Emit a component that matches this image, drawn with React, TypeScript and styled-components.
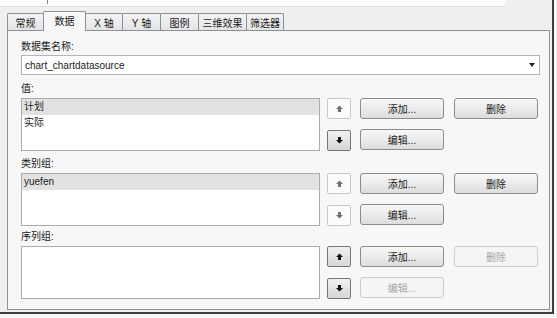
import React from "react";
import styled, { createGlobalStyle } from "styled-components";

const Global = createGlobalStyle`
  html, body { margin: 0; padding: 0; background: #f6f6f6; }
  body {
    font-family: "Liberation Sans", "Noto Sans CJK SC", sans-serif;
    font-size: 10px;
    color: #1b1b1b;
  }
`;

const Window = styled.div`
  width: 552px;
  height: 312px;
  border-right: 2px solid #3d3d3d;
  border-bottom: 2px solid #3d3d3d;
  background: #efefef;
  display: flex;
  flex-direction: column;
`;

const TopStrip = styled.div`
  height: 6px;
  width: 505px;
  background: #fbfbfb;
  border-bottom: 1px solid #e0e0e0;
  display: flex;
`;

const Caret = styled.span`
  width: 1px;
  height: 4px;
  margin-left: 47px;
  background: #888;
`;

const TabStrip = styled.div`
  display: flex;
  align-items: flex-end;
  height: 19px;
  margin: 4px 0 0 7px;
  position: relative;
  z-index: 1;
`;

const Tab = styled.div<{ $w: number; $active?: boolean }>`
  box-sizing: border-box;
  width: ${(p) => p.$w}px;
  height: ${(p) => (p.$active ? 20 : 17)}px;
  margin-bottom: ${(p) => (p.$active ? -1 : 0)}px;
  margin-left: -1px;
  &:first-child { margin-left: 0; }
  border: 1px solid #8d9097;
  border-bottom: none;
  border-radius: 2px 2px 0 0;
  background: ${(p) => (p.$active ? "#f7f7f7" : "linear-gradient(#f4f4f4, #e4e4e4)")};
  position: relative;
  z-index: ${(p) => (p.$active ? 2 : 1)};
  display: flex;
  align-items: center;
  justify-content: center;
  padding-bottom: ${(p) => (p.$active ? 2 : 0)}px;
  white-space: nowrap;
`;

const Panel = styled.div`
  box-sizing: border-box;
  margin-left: 7px;
  width: 543px;
  height: 280px;
  border: 1px solid #8d9097;
  background: #f7f7f7;
  padding: 9px 9px 0 13px;
  display: flex;
  flex-direction: column;
`;

const Label = styled.div<{ $top?: number }>`
  height: 13px;
  line-height: 13px;
  margin-top: ${(p) => p.$top ?? 0}px;
  margin-bottom: ${(p) => (p.$top === undefined ? 2 : 3)}px;
`;

const Combo = styled.div`
  box-sizing: border-box;
  width: 519px;
  height: 20px;
  background: #fff;
  border: 1px solid #b3b5ba;
  display: flex;
  align-items: center;
  justify-content: space-between;
  padding: 0 4px 0 3px;
`;

const Row = styled.div`
  display: flex;
  height: 53px;
`;

const ListBox = styled.div`
  box-sizing: border-box;
  width: 299px;
  height: 53px;
  background: #fff;
  border: 1px solid #a9abb0;
  display: flex;
  flex-direction: column;
`;

const ListItem = styled.div<{ $sel?: boolean }>`
  height: 16px;
  line-height: 16px;
  padding-left: 2px;
  background: ${(p) => (p.$sel ? "#e2e2e2" : "transparent")};
`;

const ArrowCol = styled.div`
  margin-left: 7px;
  width: 24px;
  display: flex;
  flex-direction: column;
  justify-content: space-between;
`;

const ArrowBtn = styled.div<{ $on: boolean }>`
  box-sizing: border-box;
  height: 21px;
  border: 1px solid ${(p) => (p.$on ? "#767676" : "#c8c8c8")};
  border-radius: 2px;
  background: ${(p) => (p.$on ? "linear-gradient(#f1f1f1, #d6d6d6)" : "#fbfbfb")};
  display: flex;
  align-items: center;
  justify-content: center;
`;

const BtnGrid = styled.div`
  margin-left: 9px;
  display: grid;
  grid-template-columns: 84px 84px;
  grid-template-rows: 21px 21px;
  column-gap: 10px;
  align-content: space-between;
  height: 52px;
`;

const Btn = styled.div<{ $on?: boolean }>`
  box-sizing: border-box;
  height: 21px;
  border: 1px solid ${(p) => (p.$on === false ? "#cdcdcd" : "#8c8c8c")};
  border-radius: 3px;
  background: ${(p) =>
    p.$on === false ? "#f5f5f5" : "linear-gradient(#f7f7f7 0%, #ececec 50%, #dcdcdc 100%)"};
  color: ${(p) => (p.$on === false ? "#a6a6a6" : "#1b1b1b")};
  display: flex;
  align-items: center;
  justify-content: center;
`;

const Arrow = ({ dir, on }: { dir: "up" | "down"; on: boolean }) => (
  <svg width="7" height="7" viewBox="0 0 7 7">
    <path
      d={dir === "up" ? "M3.5 0.5 L7 4 H5 V7 H2 V4 H0 Z" : "M3.5 6.5 L7 3 H5 V0 H2 V3 H0 Z"}
      fill={on ? "#111" : "#707070"}
    />
  </svg>
);

const DropArrow = () => (
  <svg width="6" height="4" viewBox="0 0 6 4">
    <path d="M0 0 H6 L3 4 Z" fill="#222" />
  </svg>
);

const tabs = [
  { t: "常规", w: 37 },
  { t: "数据", w: 43, active: true },
  { t: "X 轴", w: 38 },
  { t: "Y 轴", w: 39 },
  { t: "图例", w: 39 },
  { t: "三维效果", w: 49 },
  { t: "筛选器", w: 38 },
];

type Group = {
  label: string;
  top: number;
  items: string[];
  up: boolean;
  down: boolean;
  del: boolean;
  edit: boolean;
};

const groups: Group[] = [
  { label: "值:", top: 7, items: ["计划", "实际"], up: false, down: true, del: true, edit: true },
  { label: "类别组:", top: 6, items: ["yuefen"], up: false, down: false, del: true, edit: true },
  { label: "序列组:", top: 4, items: [], up: true, down: true, del: false, edit: false },
];

export default function App() {
  return (
    <>
      <Global />
      <Window>
        <TopStrip>
          <Caret />
        </TopStrip>
        <TabStrip>
          {tabs.map((t) => (
            <Tab key={t.t} $w={t.w} $active={t.active}>
              {t.t}
            </Tab>
          ))}
        </TabStrip>
        <Panel>
          <Label>数据集名称:</Label>
          <Combo>
            <span>chart_chartdatasource</span>
            <DropArrow />
          </Combo>
          {groups.map((g) => (
            <React.Fragment key={g.label}>
              <Label $top={g.top}>{g.label}</Label>
              <Row>
                <ListBox>
                  {g.items.map((it, i) => (
                    <ListItem key={it} $sel={i === 0}>
                      {it}
                    </ListItem>
                  ))}
                </ListBox>
                <ArrowCol>
                  <ArrowBtn $on={g.up}>
                    <Arrow dir="up" on={g.up} />
                  </ArrowBtn>
                  <ArrowBtn $on={g.down}>
                    <Arrow dir="down" on={g.down} />
                  </ArrowBtn>
                </ArrowCol>
                <BtnGrid>
                  <Btn>添加...</Btn>
                  <Btn $on={g.del}>删除</Btn>
                  <Btn $on={g.edit}>编辑...</Btn>
                </BtnGrid>
              </Row>
            </React.Fragment>
          ))}
        </Panel>
      </Window>
    </>
  );
}
